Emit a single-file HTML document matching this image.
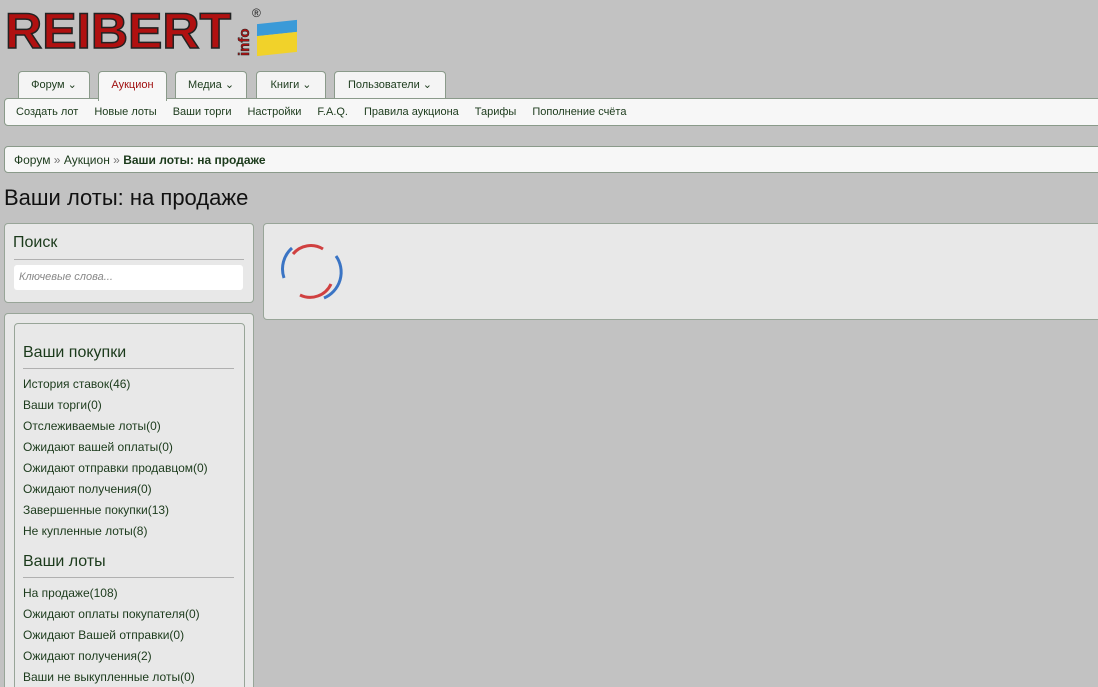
<!DOCTYPE html>
<html style="overflow:hidden;height:687px"><head><meta charset="utf-8"><style>
body{margin:0;width:1098px;height:687px;overflow:hidden;background:#c2c2c2;font-family:"Liberation Sans","DejaVu Sans",sans-serif;color:#1b3a1b;position:relative}
.a{position:absolute}
.logo{left:5px;top:6px;font:bold 50px/50px "Liberation Sans",sans-serif;color:#b01010;letter-spacing:0px;-webkit-text-stroke:1.5px #222;transform:scaleX(1.03);transform-origin:left}
.tab{top:71px;height:28px;background:#f4f4f4;border:1px solid #8a9a8a;border-bottom:none;border-radius:4px 4px 0 0;font-size:11px;line-height:27px;text-align:center;color:#1b3a1b;box-sizing:border-box}
.bar{left:4px;width:1110px;background:#f7f7f7;border:1px solid #8a9a8a;border-radius:4px;box-sizing:border-box;font-size:11px}
.panel{background:#e8e8e8;border:1px solid #98a598;border-radius:4px;box-sizing:border-box}
.l{position:absolute;left:23px;font-size:12px;color:#1b3a1b}
h3{position:absolute;margin:0;font-weight:normal;font-size:16px;color:#1b3a1b}
.hr{position:absolute;height:1px;background:#b0b0b0}
</style></head><body>
<div class="a logo">REIBERT</div>
<div class="a" style="left:237px;top:56px;font:bold 15px/15px 'Liberation Sans';color:#b01010;transform:rotate(-90deg);transform-origin:left top;-webkit-text-stroke:0.5px #222">info</div>
<div class="a" style="left:252px;top:6px;font-size:12px;color:#222">®</div>
<div class="a" style="left:257px;top:22px;width:40px;height:12px;background:#3a9ad8;transform:skewY(-6deg)"></div>
<div class="a" style="left:257px;top:34px;width:40px;height:20px;background:#f1d22a;transform:skewY(-6deg)"></div>

<div class="a tab" style="left:18px;width:72px">Форум ⌄</div>
<div class="a tab" style="left:98px;width:69px;height:30px;background:#f7f7f7;color:#a01010;z-index:2">Аукцион</div>
<div class="a tab" style="left:175px;width:72px">Медиа ⌄</div>
<div class="a tab" style="left:256px;width:70px">Книги ⌄</div>
<div class="a tab" style="left:334px;width:112px">Пользователи ⌄</div>
<div class="a bar" style="top:98px;height:28px;line-height:27px;z-index:1">
<span style="margin-left:11px">Создать лот</span><span style="margin-left:16px">Новые лоты</span><span style="margin-left:16px">Ваши торги</span><span style="margin-left:16px">Настройки</span><span style="margin-left:16px">F.A.Q.</span><span style="margin-left:16px">Правила аукциона</span><span style="margin-left:16px">Тарифы</span><span style="margin-left:16px">Пополнение счёта</span></div>
<div class="a bar" style="top:146px;height:27px;line-height:26px;font-size:12px"><span style="margin-left:9px">Форум</span> <span style="color:#777">»</span> Аукцион <span style="color:#777">»</span> <b>Ваши лоты: на продаже</b></div>
<div class="a" style="left:4px;top:185px;font-size:22px;color:#111">Ваши лоты: на продаже</div>

<div class="a panel" style="left:4px;top:223px;width:250px;height:80px">
<h3 style="left:8px;top:10px">Поиск</h3>
<div class="hr" style="left:9px;top:35px;width:230px"></div>
<div class="a" style="left:9px;top:41px;width:229px;height:25px;background:#fff;border-radius:3px;font-size:11px;font-style:italic;color:#888;line-height:25px;text-indent:5px">Ключевые слова...</div>
</div>
<div class="a panel" style="left:4px;top:313px;width:250px;height:380px">
<div class="a panel" style="left:9px;top:9px;width:231px;height:380px"></div>
</div>
<h3 style="left:23px;top:344px">Ваши покупки</h3>
<div class="hr" style="left:23px;top:368px;width:211px"></div>
<div class="l" style="top:377px">История ставок(46)</div>
<div class="l" style="top:398px">Ваши торги(0)</div>
<div class="l" style="top:419px">Отслеживаемые лоты(0)</div>
<div class="l" style="top:440px">Ожидают вашей оплаты(0)</div>
<div class="l" style="top:461px">Ожидают отправки продавцом(0)</div>
<div class="l" style="top:482px">Ожидают получения(0)</div>
<div class="l" style="top:503px">Завершенные покупки(13)</div>
<div class="l" style="top:524px">Не купленные лоты(8)</div>
<h3 style="left:23px;top:553px">Ваши лоты</h3>
<div class="hr" style="left:23px;top:577px;width:211px"></div>
<div class="l" style="top:586px">На продаже(108)</div>
<div class="l" style="top:607px">Ожидают оплаты покупателя(0)</div>
<div class="l" style="top:628px">Ожидают Вашей отправки(0)</div>
<div class="l" style="top:649px">Ожидают получения(2)</div>
<div class="l" style="top:670px">Ваши не выкупленные лоты(0)</div>

<div class="a panel" style="left:263px;top:223px;width:850px;height:97px"></div>
<svg class="a" style="left:278px;top:242px" width="68" height="60" viewBox="0 0 68 60">
<g fill="none" stroke-width="3">
<path d="M14 6 A28 28 0 0 0 6 36" stroke="#3a74c4"/>
<path d="M58 14 A28 28 0 0 1 46 56" stroke="#3a74c4"/>
<path d="M15 12 A23 23 0 0 1 45 7" stroke="#d04040"/>
<path d="M53 42 A23 23 0 0 1 22 53" stroke="#d04040"/>
</g></svg>
</body></html>
